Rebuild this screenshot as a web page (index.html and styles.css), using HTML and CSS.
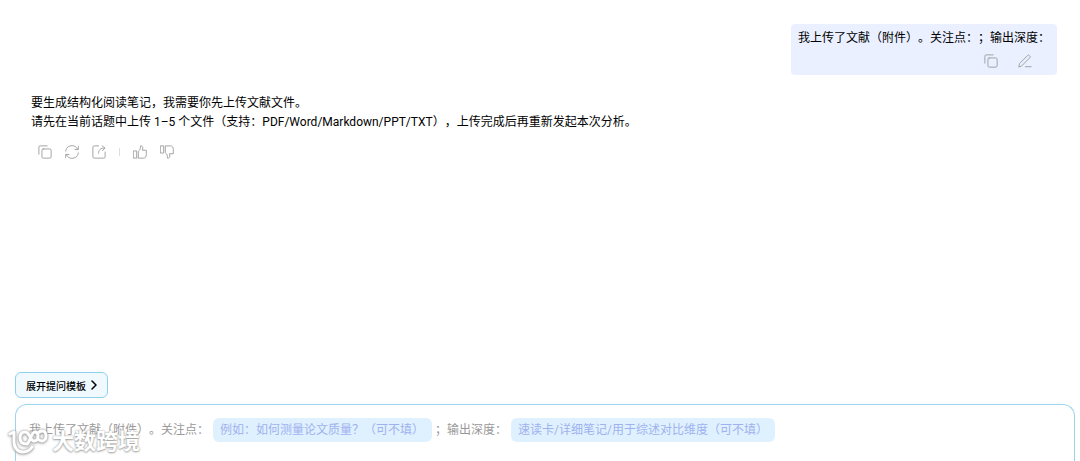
FILE: index.html
```
<!DOCTYPE html>
<html lang="zh-CN">
<head>
    <meta charset="UTF-8">
    <meta name="viewport" content="width=device-width, initial-scale=1">
    <title>阅读笔记</title>
    <link rel="stylesheet" href="styles.css">
</head>
<body>
    <main class="chat">
        <div class="user-message">
            <p>我上传了文献（附件）。关注点：；输出深度：</p>
            <div class="user-actions">
                <button class="icon-button" aria-label="复制">
                    <svg viewBox="0 0 16 16"><rect x="4.5" y="4.5" width="10.5" height="10.5" rx="1.5"/><path d="M1 10.5V2.5A1.5 1.5 0 0 1 2.5 1h8"/></svg>
                </button>
                <button class="icon-button" aria-label="编辑">
                    <svg viewBox="0 0 16 16"><path d="M1 14.5l.7-3.5L11 1.700a1.300 1.300 0 0 1 1.900 0l.6.6a1.300 1.300 0 0 1 0 1.900L4.300 13.500zM8.500 14.500h6.500"/></svg>
                </button>
            </div>
        </div>

        <div class="bot-message">
            <p>要生成结构化阅读笔记，我需要你先上传文献文件。<br>请先在当前话题中上传 1–5 个文件（支持：PDF/Word/Markdown/PPT/TXT），上传完成后再重新发起本次分析。</p>
            <div class="bot-actions">
                <button class="icon-button" aria-label="复制">
                    <svg viewBox="0 0 16 16"><rect x="4.5" y="4.5" width="10.5" height="10.5" rx="1.5"/><path d="M1 10.5V2.5A1.5 1.5 0 0 1 2.5 1h8"/></svg>
                </button>
                <button class="icon-button" aria-label="重新生成">
                    <svg viewBox="0 0 16 16"><path d="M.8 7A7.200 7.200 0 0 1 14.500 5M15.200 1.500V5.200h-3.700M15.200 9A7.200 7.200 0 0 1 1.500 11M.8 14.500V10.800h3.700"/></svg>
                </button>
                <button class="icon-button" aria-label="分享">
                    <svg viewBox="0 0 16 16"><path d="M7.500 1H2.500A1.500 1.500 0 0 0 1 2.500v11A1.500 1.500 0 0 0 2.500 15h11a1.500 1.500 0 0 0 1.500-1.500V8M7.500 9.500c0-4 2-6 7-6M11.500.8l3.300 2.700-2.800 3"/></svg>
                </button>
                <span class="divider"></span>
                <button class="icon-button" aria-label="赞">
                    <svg viewBox="0 0 16 16"><path d="M.8 6.800h3.400V15H.8zM6.500 7c1.700-1.200 2-3 2-6 1.500-.3 2.700.6 2.700 2.200 0 1-.2 2-.5 2.800h4.500v5c0 2.500-1.200 4-3.200 4H6.500z"/></svg>
                </button>
                <button class="icon-button" aria-label="踩">
                    <svg viewBox="0 0 16 16"><path d="M.8 9.200h3.400V1H.8zM6.500 9c1.700 1.200 2 3 2 6 1.500.3 2.700-.6 2.700-2.200 0-1-.2-2-.5-2.800h4.500V5c0-2.500-1.200-4-3.200-4H6.500z"/></svg>
                </button>
            </div>
        </div>
    </main>

    <footer class="bottom">
        <button class="template-button">
            展开提问模板
            <svg viewBox="0 0 8 10"><path d="M2 1l4 4-4 4"/></svg>
        </button>
        <form class="composer">
            <label for="focus">我上传了文献（附件）。关注点：</label>
            <input class="slot slot-focus" id="focus" type="text" placeholder="例如：如何测量论文质量？（可不填）">
            <label for="depth">；输出深度：</label>
            <input class="slot slot-depth" id="depth" type="text" placeholder="速读卡/详细笔记/用于综述对比维度（可不填）">
        </form>
    </footer>

    <div class="watermark">
        <svg viewBox="0 0 40 26">
            <path d="M2 5l4-2v10c0 6 4 10 9 10 4 0 7-2 9-5M19 15c-5 0-7-2-7-6s2-6 5-6c5 0 5 9 9 9 3 0 4-2 4-5s-1-4-3-4c-4 0-4 9-8 12M30 4c1-1 2-2 4-2 3 0 4 2 4 5s-2 5-4 5-3-1-4-2"/>
        </svg>
        <span>大数跨境</span>
    </div>
</body>
</html>
```

FILE: styles.css
```
* {
    box-sizing: border-box;
}
body {
    display: flex;
    flex-direction: column;
    height: 100vh;
    margin: 0;
    overflow: hidden;
    font-family: Roboto, "Noto Sans CJK SC", sans-serif;
    font-size: 12px;
    line-height: 19px;
    color: #000;
    background-color: #fff;
    text-spacing-trim: space-all;
}
p {
    margin: 0;
}
button {
    padding: 0;
    border: none;
    background: none;
    font-family: inherit;
    cursor: pointer;
}
svg {
    display: block;
    fill: none;
    stroke: currentColor;
    stroke-linecap: round;
    stroke-linejoin: round;
}
.chat {
    display: flex;
    flex: 1;
    flex-direction: column;
    min-height: 0;
    padding: 24px 23px 0 31px;
}
.user-message {
    align-self: flex-end;
    padding: 5px 7px 7px;
    border-radius: 4px;
    background-color: #eaf0ff;
}
.user-actions {
    display: flex;
    justify-content: flex-end;
    gap: 20px;
    padding: 6px 18px 0 0;
}
.icon-button {
    color: #999;
}
.icon-button svg {
    width: 14px;
    height: 14px;
}
.bot-message {
    margin-top: 19px;
}
.bot-actions {
    display: flex;
    align-items: center;
    gap: 13px;
    padding: 13px 7px 0;
}
.divider {
    width: 1px;
    height: 8px;
    background-color: #ddd;
}
.bottom {
    padding: 0 5px 0 15px;
}
.template-button {
    display: flex;
    align-items: center;
    gap: 4px;
    height: 26px;
    padding: 0 9px 0 10px;
    border: 1px solid #8fd0ef;
    border-radius: 6px;
    background-color: #f0fafe;
    color: #000;
    font-size: 10px;
    font-weight: 500;
}
.template-button svg {
    width: 8px;
    height: 10px;
    stroke-width: 1.5;
}
.composer {
    display: flex;
    align-items: flex-start;
    height: 57px;
    margin-top: 6px;
    padding: 13px;
    border: 1px solid #9bd3f0;
    border-bottom: none;
    border-radius: 12px 12px 0 0;
    color: #999;
    line-height: 24px;
    white-space: nowrap;
}
.slot {
    height: 24px;
    margin: 0 3px 0 4px;
    padding: 0 7px;
    border: none;
    border-radius: 6px;
    background-color: #dff1ff;
    color: #5b7fe8;
    font: inherit;
    text-spacing-trim: inherit;
}
.slot::placeholder {
    color: #9fb2ee;
    opacity: 1;
}
.slot-focus {
    width: 219px;
}
.slot-depth {
    width: 264px;
}
.watermark {
    position: absolute;
    bottom: 5px;
    left: 8px;
    display: flex;
    align-items: center;
    gap: 4px;
    color: #fff;
    font-size: 22px;
    font-weight: 700;
    line-height: 28px;
    text-shadow: 0 0 2px #999, 0 1px 2px #aaa;
    pointer-events: none;
}
.watermark svg {
    width: 40px;
    height: 26px;
    overflow: visible;
    stroke-width: 3;
    filter: drop-shadow(0 0 1px #999) drop-shadow(0 1px 1px #bbb);
}
```
